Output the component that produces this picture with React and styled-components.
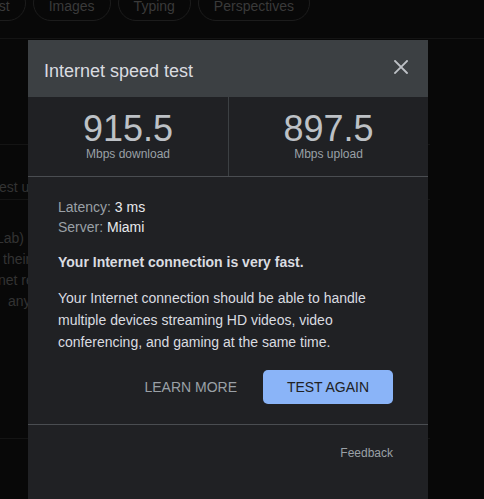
import React from "react";
import styled, { createGlobalStyle } from "styled-components";

const GlobalStyle = createGlobalStyle`
  html, body {
    margin: 0;
    padding: 0;
    background: #080808;
    font-family: "Liberation Sans", Arial, sans-serif;
  }
`;

const chips = ["Test", "Images", "Typing", "Perspectives"];

const snippets = [
  { text: "est using M-Lab", indent: -1, gap: 0 },
  { text: "Lab) and partners", indent: -4, gap: 31 },
  { text: "their connection", indent: 3, gap: 0 },
  { text: "net results", indent: -2, gap: 0 },
  { text: "any time", indent: 8, gap: 0 },
];

const App = () => {
  return (
    <Page>
      <GlobalStyle />

      {/* page behind the dialog */}
      <ChipRow>
        {chips.map((c, i) => (
          <Chip key={c} first={i === 0}>
            {c}
          </Chip>
        ))}
      </ChipRow>
      <Results>
        <TopBlock />
        <MidBlock>
          <Snippet indent={-1}>est using M-Lab</Snippet>
        </MidBlock>
        <TextBlock>
          {snippets.slice(1).map((s) => (
            <Snippet key={s.text} indent={s.indent}>
              {s.text}
            </Snippet>
          ))}
        </TextBlock>
      </Results>

      {/* dialog */}
      <Dialog>
        <Header>
          <Title>Internet speed test</Title>
          <CloseBtn aria-label="Close">
            <svg width="14" height="14" viewBox="0 0 14 14">
              <path
                d="M1 1L13 13M13 1L1 13"
                stroke="#bdc1c6"
                strokeWidth="1.8"
                strokeLinecap="square"
              />
            </svg>
          </CloseBtn>
        </Header>

        <Stats>
          <Stat>
            <StatValue>915.5</StatValue>
            <StatLabel>Mbps download</StatLabel>
          </Stat>
          <Stat divided>
            <StatValue>897.5</StatValue>
            <StatLabel>Mbps upload</StatLabel>
          </Stat>
        </Stats>

        <Body>
          <InfoLines>
            <InfoLine>
              <InfoKey>Latency:</InfoKey> 3 ms
            </InfoLine>
            <InfoLine>
              <InfoKey>Server:</InfoKey> Miami
            </InfoLine>
          </InfoLines>
          <Verdict>Your Internet connection is very fast.</Verdict>
          <Paragraph>
            Your Internet connection should be able to handle multiple devices
            streaming HD videos, video conferencing, and gaming at the same
            time.
          </Paragraph>
          <Actions>
            <TextButton>LEARN MORE</TextButton>
            <PrimaryButton>TEST AGAIN</PrimaryButton>
          </Actions>
        </Body>

        <Footer>
          <FeedbackLink>Feedback</FeedbackLink>
        </Footer>
      </Dialog>
    </Page>
  );
};

const Page = styled.div`
  position: relative;
  height: 100vh;
  overflow: hidden;
  background: #080808;
`;

const ChipRow = styled.div`
  display: flex;
  align-items: flex-end;
  gap: 7px;
  height: 39px;
  box-sizing: border-box;
  padding-bottom: 17px;
  border-bottom: 1px solid #141414;
  overflow: hidden;
`;

const Chip = styled.div`
  flex: none;
  display: flex;
  align-items: center;
  height: 36px;
  padding: 6px 15px 0;
  box-sizing: border-box;
  margin-left: ${(p) => (p.first ? "-32px" : "0")};
  border: 1px solid #1c1c1c;
  border-radius: 18px;
  color: #3a3a3a;
  font-size: 14px;
`;

const Results = styled.div`
  width: 430px;
`;

const TopBlock = styled.div`
  height: 105px;
  border-bottom: 1px solid #141414;
`;

const MidBlock = styled.div`
  height: 55px;
  box-sizing: border-box;
  padding-top: 32px;
  border-bottom: 1px solid #141414;
`;

const TextBlock = styled.div`
  height: 239px;
  box-sizing: border-box;
  padding-top: 28px;
  border-bottom: 1px solid #141414;
`;

const Snippet = styled.div`
  margin-left: ${(p) => p.indent}px;
  color: #333;
  font-size: 14px;
  line-height: 21px;
  white-space: nowrap;
`;

const Dialog = styled.div`
  position: absolute;
  top: 40px;
  left: 28px;
  bottom: 0;
  width: 400px;
  background: #202124;
  display: flex;
  flex-direction: column;
`;

const Header = styled.div`
  display: flex;
  align-items: center;
  justify-content: space-between;
  height: 57px;
  box-sizing: border-box;
  padding: 0 20px 0 16px;
  background: #3c4043;
`;

const Title = styled.div`
  color: #dadce0;
  font-size: 18px;
  padding-top: 6px;
`;

const CloseBtn = styled.button`
  display: flex;
  padding: 0;
  margin-bottom: 4px;
  background: none;
  border: none;
  cursor: pointer;
`;

const Stats = styled.div`
  display: grid;
  grid-template-columns: 1fr 1fr;
  height: 79px;
  border-bottom: 1px solid #4a4d51;
`;

const Stat = styled.div`
  display: flex;
  flex-direction: column;
  align-items: center;
  padding-top: 13px;
  border-left: ${(p) => (p.divided ? "1px solid #3c4043" : "none")};
`;

const StatValue = styled.div`
  color: #bdc1c6;
  font-size: 36px;
  line-height: 38px;
`;

const StatLabel = styled.div`
  color: #9aa0a6;
  font-size: 12px;
  line-height: 14px;
  margin-top: -1px;
`;

const Body = styled.div`
  padding: 20px 35px 20px 30px;
  border-bottom: 1px solid #4a4d51;
`;

const InfoLines = styled.div`
  display: flex;
  flex-direction: column;
`;

const InfoLine = styled.div`
  color: #e8eaed;
  font-size: 14px;
  line-height: 20px;
`;

const InfoKey = styled.span`
  color: #9aa0a6;
`;

const Verdict = styled.div`
  margin-top: 15px;
  color: #dadce0;
  font-size: 14px;
  font-weight: bold;
  line-height: 20px;
`;

const Paragraph = styled.p`
  margin: 15px 0 0;
  color: #dadce0;
  font-size: 14px;
  line-height: 22px;
`;

const Actions = styled.div`
  display: flex;
  justify-content: flex-end;
  align-items: center;
  gap: 26px;
  margin-top: 17px;
`;

const TextButton = styled.button`
  padding: 0;
  background: none;
  border: none;
  color: #9aa0a6;
  font: 14px "Liberation Sans", Arial, sans-serif;
  cursor: pointer;
`;

const PrimaryButton = styled.button`
  width: 130px;
  height: 34px;
  padding: 0;
  background: #8ab4f8;
  border: none;
  border-radius: 5px;
  color: #202124;
  font: 14px "Liberation Sans", Arial, sans-serif;
  cursor: pointer;
`;

const Footer = styled.div`
  display: flex;
  justify-content: flex-end;
  padding: 21px 35px 0 0;
`;

const FeedbackLink = styled.a`
  color: #9aa0a6;
  font-size: 12px;
  line-height: 14px;
  cursor: pointer;
`;

export default App;
